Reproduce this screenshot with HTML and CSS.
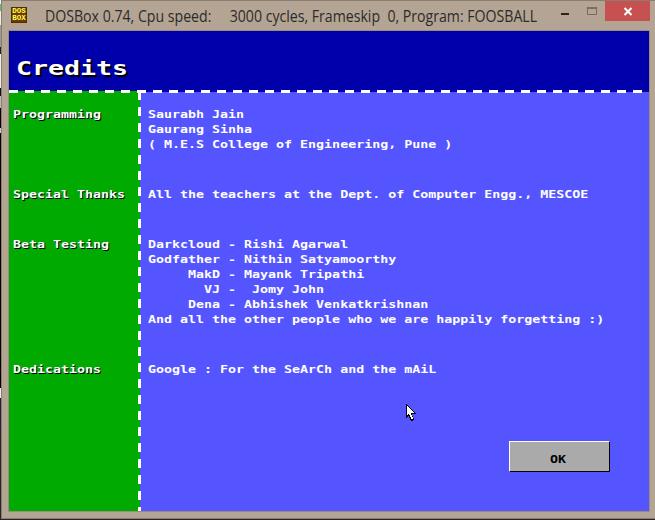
FILE: index.html
```html
<!DOCTYPE html>
<html lang="en">
<head>
<meta charset="utf-8">
<title>DOSBox</title>
<link rel="stylesheet" href="styles.css">
</head>
<body>
<div class="window">
  <header class="titlebar">
    <div class="appicon"><span>DOS</span><span>BOX</span></div>
    <div class="caption"><span>DOSBox 0.74, Cpu speed:     3000 cycles, Frameskip  0, Program: FOOSBALL</span></div>
    <svg class="controls" width="95" height="21" viewBox="0 0 95 21" shape-rendering="crispEdges">
      <rect x="6" y="12" width="8" height="2" fill="#28231f"/>
      <path d="M32 6h10v8h-10z M33 8v5h8v-5z" fill="#7b6c61" fill-rule="evenodd"/>
      <rect x="50" y="0" width="45" height="20" fill="#c75050"/>
      <path d="M69.5 7l7 7M76.5 7l-7 7" stroke="#fff" stroke-width="2" shape-rendering="auto"/>
    </svg>
  </header>
  <main class="screen">
    <div class="heading"><h1 class="dos">Credits</h1></div>
    <div class="columns">
      <section class="labels">
        <div class="row programming"><span class="dos">Programming</span></div>
        <div class="row thanks"><span class="dos">Special Thanks</span></div>
        <div class="row testing"><span class="dos">Beta Testing</span></div>
        <div class="row"><span class="dos">Dedications</span></div>
      </section>
      <section class="names">
        <div class="row programming"><span class="dos">Saurabh Jain
Gaurang Sinha
( M.E.S College of Engineering, Pune )</span></div>
        <div class="row thanks"><span class="dos">All the teachers at the Dept. of Computer Engg., MESCOE</span></div>
        <div class="row testing"><span class="dos">Darkcloud - Rishi Agarwal
Godfather - Nithin Satyamoorthy
     MakD - Mayank Tripathi
       VJ -  Jomy John
     Dena - Abhishek Venkatkrishnan
And all the other people who we are happily forgetting :)</span></div>
        <div class="row dedication"><span class="dos">Google : For the SeArCh and the mAiL</span></div>
        <button class="ok"><span class="dos">OK</span></button>
      </section>
    </div>
    <div class="dash-h"></div>
    <div class="dash-v"></div>
    <svg class="cursor" width="10" height="17" viewBox="0 0 10 17" shape-rendering="crispEdges">
      <path d="M0 0h1v1h1v1h1v1h1v1h1v1h1v1h1v1h1v1h1v1h1v1h-4v2h1v2h1v2h-1v1h-2v-1h-1v-2h-1v-2h-1v1h-1v1h-1z" fill="#000"/>
      <path d="M1 2h1v1h1v1h1v1h1v1h1v1h1v1h1v1h-3v2h1v2h1v2h-2v-2h-1v-2h-1v-1h-1v1h-1z" fill="#fff"/>
    </svg>
  </main>
</div>
</body>
</html>
```

FILE: styles.css
```css
* { box-sizing: border-box; }

body {
  margin: 0;
  width: 655px;
  height: 520px;
  overflow: hidden;
  padding: 0 0 1px 1px;
  background: linear-gradient(#eee 0 4px, #6ab878 4px 11px, #eee 11px 25px, #999 25px 47px, #222 47px 54px, #eee 54px 88px, #111 88px 96px, #bbb 96px 108px, #000 108px 128px, #ccc 128px 133px, #000 133px 388px, #eee 388px 398px, #25203d 398px 425px, #292525 425px);
}

.window {
  width: 654px;
  height: 519px;
  padding: 0 5px 7px 7px;
  background: #b4a494;
  border-top: 1px solid #8b7c70;
  border-left: 1px solid #8b7c70;
  border-bottom: 1px solid #8b7c70;
}

.titlebar {
  display: flex;
  height: 30px;
}

.appicon {
  flex: none;
  width: 16px;
  height: 16px;
  margin: 6px 0 0 2px;
  display: flex;
  flex-direction: column;
  align-items: center;
  background: #6b3d06;
  border: 1px solid #552c00;
  color: #ffff4a;
  font: bold 7.5px/7px "Liberation Mono", monospace;
}

.caption {
  flex: none;
  width: 516px;
  padding-left: 18px;
  color: #2c2b2a;
  font: 15.5px/29px "Open Sans", sans-serif;
  white-space: pre;
}

.caption span {
  display: inline-block;
  transform: translateY(.5px) scaleX(.911);
  transform-origin: 0 0;
}

.controls {
  flex: none;
  margin-left: 12px;
}

.screen {
  position: relative;
  width: 640px;
  height: 480px;
  background: #5555ff;
  outline: 1px solid #9b8b7c;
}

.heading {
  height: 60px;
  padding: 26px 0 0 7px;
  background: #0000aa;
}

.dos {
  display: block;
  width: max-content;
  font: bold 9.6px/15px "DejaVu Sans Mono", monospace;
  white-space: pre;
  color: #fff;
  transform: scaleX(1.386);
  transform-origin: 0 0;
}

.heading .dos {
  margin: 0;
  font-size: 19.2px;
  line-height: 24px;
  text-shadow: 1.5px 2px 0 #000;
}

.columns {
  display: flex;
  height: 420px;
}

.labels {
  width: 131px;
  padding: 16px 0 0 4px;
  background: #00aa00;
}

.labels .dos { text-shadow: .75px 1px 0 #000; }

.names {
  flex: 1;
  padding: 15px 0 0 8px;
  border-top: 1px solid #0000aa;
}

.programming { height: 80px; }
.thanks { height: 50px; }
.testing { height: 125px; }
.dedication { height: 79px; }

.ok {
  display: block;
  width: 101px;
  height: 31px;
  margin-left: 361px;
  padding: 6px 0 0 40px;
  background: #aaaaaa;
  border: 1px solid;
  border-color: #fff #000 #000 #fff;
  border-radius: 0;
}

.ok .dos { color: #000; }

.dash-h {
  position: absolute;
  left: 0;
  top: 59px;
  width: 640px;
  height: 3px;
  background: repeating-linear-gradient(90deg, #fff 0 9px, transparent 9px 16px);
}

.dash-v {
  position: absolute;
  left: 129px;
  top: 60px;
  width: 3px;
  height: 420px;
  background: repeating-linear-gradient(#fff 0 9px, transparent 9px 16px);
}

.cursor {
  position: absolute;
  left: 397px;
  top: 373px;
}
```
